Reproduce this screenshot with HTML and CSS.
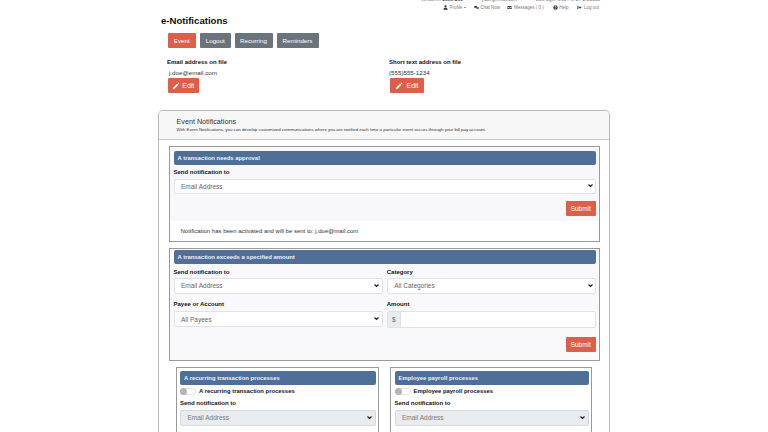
FILE: index.html
```html
<!DOCTYPE html>
<html lang="en">
<head>
<meta charset="utf-8">
<title>e-Notifications</title>
<link rel="stylesheet" href="styles.css">
</head>
<body>
<svg class="defs" width="0" height="0" aria-hidden="true">
  <symbol id="pencil" viewBox="0 0 16 16"><path fill="currentColor" d="M12.5 1 15 3.5 13.4 5.1 10.9 2.6ZM10 3.5 12.5 6 5.2 13.3 1.5 14.5 2.7 10.8Z"/></symbol>
</svg>
<div class="page">
  <header class="topbar">
    <div class="topline">
      <span>Welcome: <b>John Doe</b></span>
      <span>j.doe@email.com</span>
      <span>Last login: 6:01 PM ET 2/3/2021</span>
    </div>
    <nav class="toplinks">
      <span class="toplink"><svg class="ti" viewBox="0 0 16 16"><circle cx="8" cy="4.5" r="3.5" fill="currentColor"/><path fill="currentColor" d="M1 15c0-4 3-6 7-6s7 2 7 6Z"/></svg>Profile<i class="caret"></i></span>
      <span class="toplink"><svg class="ti" viewBox="0 0 16 16"><path fill="currentColor" d="M1 3h9v6H5L2.500 11V9H1Z"/><path fill="currentColor" d="M11 6h4v6h-1v2l-2.500-2H7v-2h4Z"/></svg>Chat Now</span>
      <span class="toplink"><svg class="ti" viewBox="0 0 16 16"><path fill="currentColor" d="M1 3h14v2L8 9 1 5ZM1 7l7 4 7-4v6H1Z"/></svg>Messages ( 0 )</span>
      <span class="toplink toplink-wide"><svg class="ti" viewBox="0 0 16 16"><circle cx="8" cy="8" r="7" fill="currentColor"/><path fill="none" stroke="#fff" stroke-width="2" d="M5.500 6.500C5.500 3.500 10.500 3.500 10.500 6.500 10.500 8.200 8 8 8 10"/><rect x="7" y="11" width="2" height="2" fill="#fff"/></svg>Help</span>
      <span class="toplink toplink-wide"><svg class="ti" viewBox="0 0 16 16"><path fill="currentColor" d="M1 3h5v2H3v6h3v2H1ZM9 4l6 4-6 4V9.500H5v-3h4Z"/></svg>Log out</span>
    </nav>
  </header>

  <h1 class="brand">e-Notifications</h1>
  <nav class="tabs">
    <a class="btn btn-red tab">Event</a>
    <a class="btn btn-gray tab">Logout</a>
    <a class="btn btn-gray tab">Recurring</a>
    <a class="btn btn-gray tab">Reminders</a>
  </nav>

  <section class="contacts">
    <div class="contact">
      <h2 class="contact-title">Email address on file</h2>
      <p class="contact-value">j.doe@email.com</p>
      <a class="btn btn-red edit"><svg class="pen"><use href="#pencil"/></svg>Edit</a>
    </div>
    <div class="contact contact-right">
      <h2 class="contact-title">Short text address on file</h2>
      <p class="contact-value">(555)555-1234</p>
      <a class="btn btn-red edit"><svg class="pen"><use href="#pencil"/></svg>Edit</a>
    </div>
  </section>

  <main class="panel">
    <div class="panel-head">
      <h2 class="panel-title">Event Notifications</h2>
      <p class="panel-sub">With Event Notifications, you can develop customized communications where you are notified each time a particular event occurs through your bill pay account.</p>
    </div>
    <div class="panel-body">
      <section class="box box-first">
        <div class="form-area">
          <h3 class="bar">A transaction needs approval</h3>
          <label class="lbl lbl-first">Send notification to</label>
          <div class="select select-first"><span>Email Address</span><svg class="chev" viewBox="0 0 10 7"><path d="M1 1l4 4 4-4" fill="none" stroke="#222" stroke-width="2.4"/></svg></div>
          <div class="actions"><a class="btn btn-red submit">Submit</a></div>
        </div>
        <p class="note">Notification has been activated and will be sent to: j.doe@mail.com</p>
      </section>

      <section class="box box-second">
        <h3 class="bar">A transaction exceeds a specified amount</h3>
        <div class="two">
          <div>
            <label class="lbl">Send notification to</label>
            <div class="select"><span>Email Address</span><svg class="chev" viewBox="0 0 10 7"><path d="M1 1l4 4 4-4" fill="none" stroke="#222" stroke-width="2.4"/></svg></div>
            <label class="lbl lbl-row2">Payee or Account</label>
            <div class="select select-tall"><span>All Payees</span><svg class="chev" viewBox="0 0 10 7"><path d="M1 1l4 4 4-4" fill="none" stroke="#222" stroke-width="2.4"/></svg></div>
          </div>
          <div>
            <label class="lbl">Category</label>
            <div class="select"><span>All Categories</span><svg class="chev" viewBox="0 0 10 7"><path d="M1 1l4 4 4-4" fill="none" stroke="#222" stroke-width="2.4"/></svg></div>
            <label class="lbl lbl-row2">Amount</label>
            <div class="amount"><span class="addon">$</span><span class="amount-input"></span></div>
          </div>
        </div>
        <div class="actions actions-second"><a class="btn btn-red submit">Submit</a></div>
      </section>

      <div class="pair">
        <section class="box box-small">
          <h3 class="bar">A recurring transaction processes</h3>
          <div class="toggle-row"><span class="toggle"><i class="knob"></i></span><b>A recurring transaction processes</b></div>
          <label class="lbl lbl-small">Send notification to</label>
          <div class="select select-off"><span>Email Address</span><svg class="chev" viewBox="0 0 10 7"><path d="M1 1l4 4 4-4" fill="none" stroke="#222" stroke-width="2.4"/></svg></div>
        </section>
        <section class="box box-small">
          <h3 class="bar">Employee payroll processes</h3>
          <div class="toggle-row"><span class="toggle"><i class="knob"></i></span><b>Employee payroll processes</b></div>
          <label class="lbl lbl-small">Send notification to</label>
          <div class="select select-off"><span>Email Address</span><svg class="chev" viewBox="0 0 10 7"><path d="M1 1l4 4 4-4" fill="none" stroke="#222" stroke-width="2.4"/></svg></div>
        </section>
      </div>
    </div>
  </main>
</div>
</body>
</html>
```
FILE: styles.css
```css
* { box-sizing: border-box; }
html, body { margin: 0; height: 432px; overflow: hidden; background: #fff; }
body { font-family: "Liberation Sans", Arial, sans-serif; color: #222; }
.defs { position: absolute; }
.page { width: 452px; margin-left: 158px; }

.topbar { height: 14px; margin-top: -4px; font-size: 4.500px; color: #777; }
.topline { display: flex; justify-content: flex-end; gap: 19px; height: 8px; padding-right: 10px; line-height: 8px; }
.topline b { color: #333; }
.toplinks { display: flex; justify-content: flex-end; gap: 7.500px; padding-right: 11px; line-height: 7px; height: 7px; }
.toplink { display: flex; align-items: center; gap: 1.500px; }
.toplink-wide { margin-left: 1.500px; }
.ti { width: 5px; height: 5px; color: #3a3a3a; }
.caret { width: 0; height: 0; border: 1.5px solid transparent; border-top-color: #333; border-bottom: 0; margin-left: 0.500px; }

.brand { margin: 3px 0 0 3px; font-size: 9.600px; line-height: 16px; font-weight: 700; color: #111; }
.btn { display: flex; align-items: center; justify-content: center; height: 15px; border-radius: 1px; font-size: 6.200px; color: #fff; }
.btn-red { background: #de5f49; }
.btn-gray { background: #6b747d; }
.tabs { display: flex; gap: 4px; margin: 4px 0 0 9.500px; }
.tab:nth-child(1) { width: 28.500px; }
.tab:nth-child(2) { width: 30.500px; }
.tab:nth-child(3) { width: 38px; }
.tab:nth-child(4) { width: 42px; }

.contacts { display: grid; grid-template-columns: 222px 1fr; margin: 10px 0 0 9px; }
.contact-title { margin: 0; font-size: 6px; line-height: 8px; font-weight: 700; color: #111; }
.contact-value { margin: 3px 0 1px 2px; font-size: 6.200px; line-height: 8px; color: #333; }
.contact-right .contact-value { margin-left: 0; }
.edit { width: 30.500px; margin-left: 1px; gap: 2px; font-size: 7px; }
.contact-right .edit { width: 34px; gap: 3px; }
.pen { width: 8px; height: 8px; color: #fff; }

.panel { margin-top: 17px; height: 340px; border: 1.5px solid #b9b9b9; border-bottom: 0; border-radius: 5px 5px 0 0; }
.panel-head { height: 29px; padding: 6.500px 17.500px 0; background: #f7f7f7; border-bottom: 1.5px solid #c4c4c4; border-radius: 4px 4px 0 0; }
.panel-title { margin: 0; font-size: 7.200px; line-height: 8px; font-weight: 400; color: #333; }
.panel-sub { margin: 1px 0 0; font-size: 4.400px; line-height: 6px; color: #333; white-space: nowrap; }
.panel-body { padding: 6px 9px 0 9.500px; }

.box { border: 1px solid #9a9a9a; background: #fff; }
.box-first { height: 96px; }
.form-area { height: 73.500px; padding: 4px 3px 0 4px; background: #f8f8fb; }
.box-second { height: 113px; margin-top: 6px; padding: 1px 3px 0 4px; background: #f9f9fb; }
.bar { height: 14px; margin: 0; padding-left: 4px; border-radius: 2px; background: #4f6f99; color: #eef2f7; font-size: 5.900px; line-height: 14px; font-weight: 700; }
.lbl { display: block; font-size: 6px; line-height: 8px; font-weight: 700; color: #111; }
.lbl-first { margin: 3px 0 2.500px; }
.select { display: flex; align-items: center; justify-content: space-between; height: 15.500px; padding: 0 2.500px 0 6.500px; background: #fff; border: 1px solid #dfe2e6; border-radius: 2px; font-size: 6.500px; color: #666; }
.select-first { height: 15px; }
.select-tall { height: 16px; }
.chev { width: 5px; height: 3.500px; }
.actions { display: flex; justify-content: flex-end; margin-top: 7.500px; }
.submit { width: 30.500px; height: 15px; font-size: 6.500px; }
.note { margin: 6px 0 0 11px; font-size: 6px; line-height: 8px; color: #333; }

.two { display: grid; grid-template-columns: 1fr 1fr; column-gap: 4px; margin-top: 3.500px; }
.two .lbl { margin-bottom: 2.500px; }
.two .lbl-row2 { margin: 6px 0 3.500px; }
.amount { display: flex; height: 17px; border: 1px solid #dfe2e6; border-radius: 2px; background: #fff; }
.addon { display: flex; width: 13px; align-items: center; justify-content: center; background: #e9ecef; border-right: 1px solid #dfe2e6; font-size: 6.500px; color: #666; }
.amount-input { flex: 1; }
.actions-second { margin-top: 9px; }

.pair { display: grid; grid-template-columns: 203.500px 202px; column-gap: 11px; margin: 6px 0 0 7px; }
.box-small { height: 80px; padding: 3px 2.500px 0 3.500px; }
.toggle-row { display: flex; align-items: center; gap: 3px; height: 9px; margin-top: 1.500px; font-size: 5.900px; color: #111; }
.toggle { display: flex; width: 16px; height: 7px; border-radius: 4px; background: #fff; border: 1px solid #e4e4e4; }
.knob { width: 7px; height: 7px; margin: -1px 0 0 -1px; border-radius: 50%; background: #b5b5b8; }
.lbl-small { margin: 3.500px 0 3px; }
.select-off { background: #e9ecef; border-color: #d5d8dc; color: #777; }
```
